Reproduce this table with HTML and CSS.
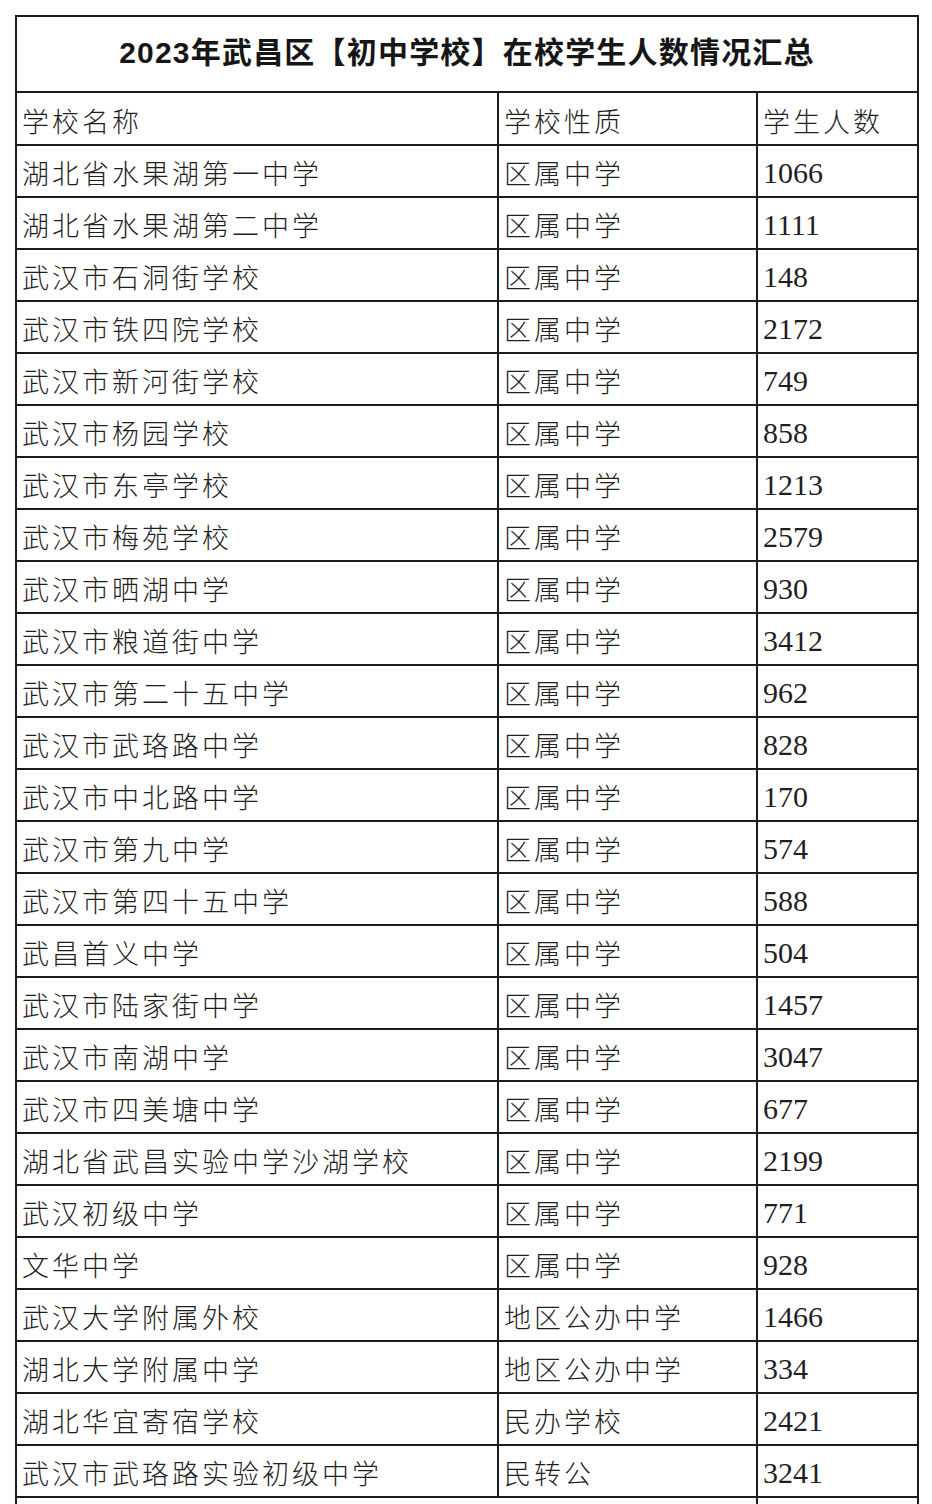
FILE: index.html
```html
<!DOCTYPE html>
<html lang="zh-CN">
<head>
<meta charset="utf-8">
<title>2023年武昌区【初中学校】在校学生人数情况汇总</title>
<link rel="stylesheet" href="styles.css">
</head>
<body>
<table class="sheet">
  <colgroup>
    <col class="c-name">
    <col class="c-type">
    <col class="c-num">
  </colgroup>
  <thead>
    <tr class="title-row"><th colspan="3" class="title">2023年武昌区【初中学校】在校学生人数情况汇总</th></tr>
    <tr class="head-row"><th>学校名称</th><th>学校性质</th><th>学生人数</th></tr>
  </thead>
  <tbody>
    <tr><td>湖北省水果湖第一中学</td><td>区属中学</td><td class="num">1066</td></tr>
    <tr><td>湖北省水果湖第二中学</td><td>区属中学</td><td class="num">1111</td></tr>
    <tr><td>武汉市石洞街学校</td><td>区属中学</td><td class="num">148</td></tr>
    <tr><td>武汉市铁四院学校</td><td>区属中学</td><td class="num">2172</td></tr>
    <tr><td>武汉市新河街学校</td><td>区属中学</td><td class="num">749</td></tr>
    <tr><td>武汉市杨园学校</td><td>区属中学</td><td class="num">858</td></tr>
    <tr><td>武汉市东亭学校</td><td>区属中学</td><td class="num">1213</td></tr>
    <tr><td>武汉市梅苑学校</td><td>区属中学</td><td class="num">2579</td></tr>
    <tr><td>武汉市晒湖中学</td><td>区属中学</td><td class="num">930</td></tr>
    <tr><td>武汉市粮道街中学</td><td>区属中学</td><td class="num">3412</td></tr>
    <tr><td>武汉市第二十五中学</td><td>区属中学</td><td class="num">962</td></tr>
    <tr><td>武汉市武珞路中学</td><td>区属中学</td><td class="num">828</td></tr>
    <tr><td>武汉市中北路中学</td><td>区属中学</td><td class="num">170</td></tr>
    <tr><td>武汉市第九中学</td><td>区属中学</td><td class="num">574</td></tr>
    <tr><td>武汉市第四十五中学</td><td>区属中学</td><td class="num">588</td></tr>
    <tr><td>武昌首义中学</td><td>区属中学</td><td class="num">504</td></tr>
    <tr><td>武汉市陆家街中学</td><td>区属中学</td><td class="num">1457</td></tr>
    <tr><td>武汉市南湖中学</td><td>区属中学</td><td class="num">3047</td></tr>
    <tr><td>武汉市四美塘中学</td><td>区属中学</td><td class="num">677</td></tr>
    <tr><td>湖北省武昌实验中学沙湖学校</td><td>区属中学</td><td class="num">2199</td></tr>
    <tr><td>武汉初级中学</td><td>区属中学</td><td class="num">771</td></tr>
    <tr><td>文华中学</td><td>区属中学</td><td class="num">928</td></tr>
    <tr><td>武汉大学附属外校</td><td>地区公办中学</td><td class="num">1466</td></tr>
    <tr><td>湖北大学附属中学</td><td>地区公办中学</td><td class="num">334</td></tr>
    <tr><td>湖北华宜寄宿学校</td><td>民办学校</td><td class="num">2421</td></tr>
    <tr><td>武汉市武珞路实验初级中学</td><td>民转公</td><td class="num">3241</td></tr>
    <tr><td colspan="2">&nbsp;</td><td class="num">&nbsp;</td></tr>
  </tbody>
</table>
</body>
</html>
```
FILE: styles.css
```css
html, body {
  margin: 0;
  padding: 0;
  background: #ffffff;
}
body {
  padding: 15px 0 0 15px;
  color: #1f1f1f;
  font-family: "Noto Sans CJK SC", "Noto Sans", sans-serif;
}
.sheet {
  border-collapse: collapse;
  table-layout: fixed;
  width: 902px;
}
.c-name { width: 482px; }
.c-type { width: 259px; }
.c-num { width: 161px; }

.sheet th,
.sheet td {
  border: 2px solid #1c1c1c;
  padding: 0 0 0 5px;
  text-align: left;
  vertical-align: middle;
  font-weight: 300;
  font-size: 27px;
  letter-spacing: 3px;
  line-height: 1;
  white-space: nowrap;
  overflow: hidden;
}
.sheet tbody tr { height: 52px; }
.sheet tbody td { padding-top: 3px; }
.head-row { height: 53px; }
.head-row th { padding-top: 3px; }
.title-row { height: 76px; }
.sheet th.title {
  text-align: center;
  font-family: "Liberation Sans", "Noto Sans CJK SC", sans-serif;
  font-weight: 700;
  font-size: 30px;
  letter-spacing: 1.2px;
  padding: 0 0 2px 0;
  color: #161616;
}
.sheet td.num {
  font-family: "Liberation Serif", "DejaVu Serif", serif;
  font-size: 30px;
  letter-spacing: 0;
  font-weight: 400;
  padding-left: 5px;
}
```
